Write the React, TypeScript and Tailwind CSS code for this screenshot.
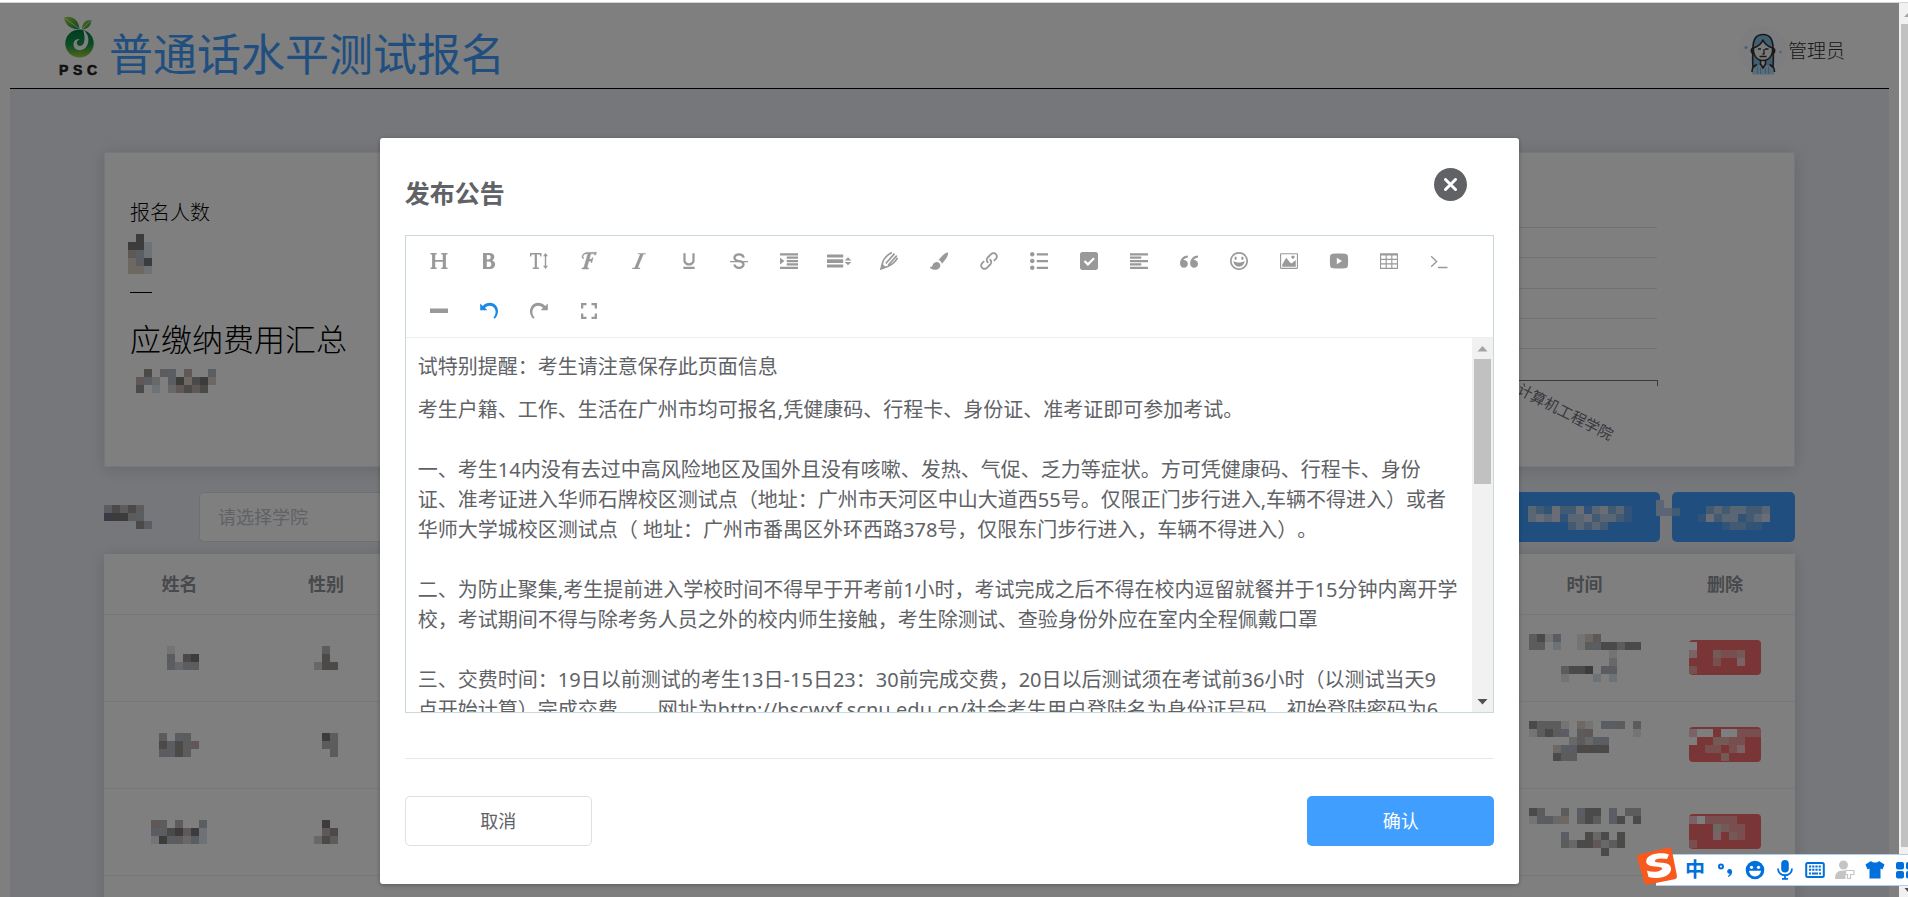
import React, { useState } from 'react';
import {
  ImItalic,
  ImUnderline,
  ImStrikethrough,
  ImIndentIncrease,
  ImLink,
  ImList2,
  ImCheckboxChecked,
  ImParagraphLeft,
  ImQuotesLeft,
  ImHappy,
  ImImage,
  ImTable2,
} from 'react-icons/im';

// Colours of the blocks that hide personal data
const palette: Record<string, string> = {
  d: '#787878',
  k: '#989492',
  g: '#b8b8b8',
  m: '#d0d0d0',
  l: '#e8e8e8',
  n: '#b4bcc4',
  b: '#d8e4ec',
  t: '#dcd0c4',
  r: '#c0b0ac',
  p: '#78708c',
  A: '#b4cce8',
  B: '#84b4e4',
  C: '#62a6ee',
  D: '#d4d8ec',
  P: '#f09c9c',
  Q: '#e8b4a8',
  R: '#f4c4cc',
  W: '#fcfcfc',
};

const Mosaic: React.FC<{ rows: string[]; className?: string }> = ({ rows, className = '' }) => {
  const w = Math.max(...rows.map((r) => r.length)) * 8;
  const h = rows.length * 8;
  return (
    <svg width={w} height={h} shapeRendering="crispEdges" className={`shrink-0 ${className}`} aria-hidden="true">
      {rows.map((row, y) =>
        row.split('').map((c, x) =>
          palette[c] ? <rect key={`${x}-${y}`} x={x * 8} y={y * 8} width="8" height="8" fill={palette[c]} /> : null
        )
      )}
    </svg>
  );
};

const Glyph: React.FC<{ children: React.ReactNode }> = ({ children }) => (
  <svg width="18" height="18" viewBox="0 0 18 18" fill="currentColor" overflow="visible">
    {children}
  </svg>
);

const tools = [
  { name: '标题', icon: <Glyph><path d="M.5 1h6.200v1.500H5.200v5.600h7.600V2.500h-1.500V1h6.200v1.500h-1.600v13h1.600V17h-6.200v-1.500h1.500V9.800H5.200v5.700h1.500V17H.5v-1.500h1.600v-13H.5z" /></Glyph> },
  { name: '加粗', icon: <Glyph><path fillRule="evenodd" d="M3 1h6.600c3.100 0 4.700 1.600 4.700 4 0 1.700-.8 2.800-2.100 3.400 1.800.5 2.900 1.900 2.900 3.900 0 3-1.900 4.700-5.300 4.700H3zm3.800 2v4.400h1.700c1.400 0 2.200-.8 2.200-2.200S9.900 3 8.500 3zm0 6.500V15h2c1.700 0 2.500-1.100 2.500-2.800s-.9-2.700-2.500-2.700z" /></Glyph> },
  { name: '字号', icon: <Glyph><path d="M0 1h11.500v3.600h-1.200l-.5-2.100H6.900v13.100h2V17H2.700v-1.400h2V2.500H1.700l-.5 2.100H0zM15.500 1l2.500 3.200h-1.800v9.600H18L15.500 17 13 13.800h1.800V4.200H13z" /></Glyph> },
  { name: '字体', icon: <Glyph><path stroke="currentColor" strokeWidth=".5" d="M3.200 6.800C1.500 6 1.700 3.300 3.400 1.900 4.900.6 7 .3 9 .4l7.500-.2-.9 2.900h-1l.1-1.300h-4L9.300 7.300h2.200l.8-1.500h.8l-1.300 4.800H11l.1-1.500H8.800l-1.600 5.700c-.2.8.2 1.100 1.400 1.300l-.2.900H1.800l.2-.9c1.300-.2 1.900-.6 2.200-1.600L7.900 1.700C5.500 1.600 3.200 2.300 3 4.300c-.1.900.2 1.400.9 1.700z" /></Glyph> },
  { name: '斜体', icon: <ImItalic size={18} /> },
  { name: '下划线', icon: <ImUnderline size={18} /> },
  { name: '删除线', icon: <ImStrikethrough size={18} /> },
  { name: '缩进', icon: <ImIndentIncrease size={18} /> },
  { name: '行高', icon: <Glyph><path d="M-3 2.500h16.200v3.100H-3zM-3 7.200h16.200v3.800H-3zM-3 12.400h16.200v3.100H-3zM18 5.200l3.300 3.300h-6.600zM18 13.300l3.300-3.300h-6.600z" /></Glyph> },
  { name: '文字颜色', icon: <Glyph><g fill="none" stroke="currentColor" strokeWidth="1.700"><path d="M11.800.4C8 2.600 4.200 6 3 9.200L1 16.800l7.300-2.600C12 12.500 15.500 9.500 17.500 5.800M5.800 11.500 14.500 1.600M8.200 13.200l8.600-9.600" /></g><path d="M2.200 11.500.5 17.500l5.600-2z" /></Glyph> },
  { name: '背景颜色', icon: <Glyph><path d="M17.300.2c1 .4.900 1.700.3 3.300-1 2.800-3.300 5.900-5.800 8.200-.3-1.700-1.500-3-3.200-3.600C10.900 5 14.300 1.400 17.300.2zM5.700 10.200c2.700-.7 5.300 1.700 4.500 4.200-1.100 3.700-6.400 4.300-9.500 2.200-.7-.5-.8-1.100-.5-1.800.8.400 1.700.200 2-.8.500-1.900 1.600-3.300 3.500-3.800z" /></Glyph> },
  { name: '链接', icon: <ImLink size={18} /> },
  { name: '列表', icon: <ImList2 size={18} /> },
  { name: '待办', icon: <ImCheckboxChecked size={18} /> },
  { name: '对齐', icon: <ImParagraphLeft size={18} /> },
  { name: '引用', icon: <ImQuotesLeft size={18} /> },
  { name: '表情', icon: <ImHappy size={18} /> },
  { name: '图片', icon: <ImImage size={18} /> },
  { name: '视频', icon: <Glyph><path fillRule="evenodd" d="M3 1.700c4-.3 8-.3 12 0 2 .2 2.700 1 2.900 2.800.3 3 .3 6 0 9-.2 1.800-.9 2.600-2.900 2.800-4 .3-8 .3-12 0-2-.2-2.700-1-2.900-2.800-.3-3-.3-6 0-9 .2-1.800.9-2.600 2.900-2.800zm3.800 4.100v6.500L12 9z" /></Glyph> },
  { name: '表格', icon: <ImTable2 size={18} /> },
  { name: '代码', icon: <Glyph><path d="m1.200 4.200 5.400 5.300-5.400 5.300M8 15.500h9.500" fill="none" stroke="currentColor" strokeWidth="1.400" /></Glyph> },
  { name: '分割线', icon: <Glyph><path d="M0 6.500h18v4.500H0z" /></Glyph> },
  { name: '撤销', active: true, icon: <Glyph><path d="M.2 1.500 2.700 4C7-.5 14-.2 16.800 4.800c2.200 4 1.300 8.700-2 12l-1.400-1.200c2.400-2.600 2.900-6 1.400-8.900-2-3.600-6.500-4.100-9.800-1L7.300 8.200H.2z" /></Glyph> },
  { name: '重做', icon: <Glyph><path d="M17.800 1.500 15.300 4C11-.5 4-.2 1.200 4.800c-2.200 4-1.300 8.700 2 12l1.400-1.200C2.200 13 1.700 9.600 3.200 6.700c2-3.600 6.500-4.100 9.800-1l-2.300 2.500h7.100z" /></Glyph> },
  { name: '全屏', icon: <Glyph><path d="M1 1h5.500v2.300H3.300v3.200H1zM11.500 1H17v5.500h-2.300V3.300h-3.200zM1 11.500h2.300v3.200h3.200V17H1zM14.700 11.500H17V17h-5.500v-2.300h3.200z" /></Glyph> },
];

const rows = [
  {
    name: ['.l...', '.g.kd', '.nmng'],
    sex: ['.g.', '.k.', 'mkk'],
    time: ['gkln..ltr.....', 'gg.b..lgnkkgkk', '..........l...', '..........m...', '....gkkd.gn...', '....l...b.b...'],
    del: ['W........', 'R..QPPQ..', '...P..R..', 'P........'],
  },
  {
    name: ['.g.ng..', '.knkgr.', '.gnkg..'],
    sex: ['.dn', '.gg', '..g'],
    time: ['kgggl.tl.nng.g', 'lgkgn.gr.....l', '.....mgmnn....', '...tnnkkkk....', '...kgg........', '..............'],
    del: ['RWW.WWPPP', 'W..QQPP..', '..PP.PR..', '....Q....'],
  },
  {
    name: ['rg.g..n', 'nnkdrdb', 'ldngmnb'],
    sex: ['.d.', '.rk', 'mkg'],
    time: ['kg..g.nkk.n.gg', 'lngmt.gkg.nk.k', '..............', '....n..kmk.k..', '....gmkkrmgk..', '.........k....'],
    del: ['RWPPPP...', '...tQPP..', '...R.QP..', 'P........'],
  },
];

const notice = [
  ['试特别提醒：考生请注意保存此页面信息'],
  [
    '考生户籍、工作、生活在广州市均可报名,凭健康码、行程卡、身份证、准考证即可参加考试。',
    '',
    '一、考生14内没有去过中高风险地区及国外且没有咳嗽、发热、气促、乏力等症状。方可凭健康码、行程卡、身份',
    '证、准考证进入华师石牌校区测试点（地址：广州市天河区中山大道西55号。仅限正门步行进入,车辆不得进入）或者',
    '华师大学城校区测试点（ 地址：广州市番禺区外环西路378号，仅限东门步行进入，车辆不得进入）。',
    '',
    '二、为防止聚集,考生提前进入学校时间不得早于开考前1小时，考试完成之后不得在校内逗留就餐并于15分钟内离开学',
    '校，考试期间不得与除考务人员之外的校内师生接触，考生除测试、查验身份外应在室内全程佩戴口罩',
    '',
    '三、交费时间：19日以前测试的考生13日-15日23：30前完成交费，20日以后测试须在考试前36小时（以测试当天9',
    '点开始计算）完成交费　　网址为http://hscwxf.scnu.edu.cn/社会考生用户登陆名为身份证号码，初始登陆密码为6',
  ],
];

const Logo: React.FC = () => (
  <svg width="40" height="62" viewBox="0 0 40 62" aria-label="PSC">
    <defs>
      <linearGradient id="fruit" x1="0" y1="0" x2="0" y2="1">
        <stop offset="0" stopColor="#007a48" />
        <stop offset=".55" stopColor="#159a48" />
        <stop offset="1" stopColor="#a4cc38" />
      </linearGradient>
      <linearGradient id="leaf" x1="0" y1="0" x2="1" y2="1">
        <stop offset="0" stopColor="#a8d840" />
        <stop offset="1" stopColor="#188c40" />
      </linearGradient>
    </defs>
    <path d="M5 2.500c6-2 14 0 15.500 11.500C13 14.500 6.500 11.500 5 2.500z" fill="url(#leaf)" />
    <path d="M32.500 5c-5.500-.5-9.500 2.500-9.500 9.500 5.500-.5 8.800-3 9.500-9.500z" fill="url(#leaf)" />
    <path d="m5 2.500 15 11M32.500 5 23 14" stroke="#fff" strokeWidth=".7" fill="none" />
    <ellipse cx="20.500" cy="28.500" rx="14.200" ry="14" fill="url(#fruit)" />
    <path d="M24 14.800c6.500 4.500 7 13 2.500 18-4.500 4.500-12 2.500-12-3.500 0-4 3.500-6 6.500-4.800-2.700.6-4 3-2.700 5 1.700 2.500 5.200 1.700 6.500-1.500 1.500-4 .7-8.700-.8-13.200z" fill="#fff" />
    <g fontFamily="Liberation Sans" fontWeight="700" fontSize="14" fill="#222" stroke="#222" strokeWidth=".6">
      <text x="0" y="59.500">P</text>
      <text x="14" y="59.500">S</text>
      <text x="28" y="59.500">C</text>
    </g>
  </svg>
);

const Avatar: React.FC = () => (
  <svg width="50" height="50" viewBox="0 0 50 50" aria-hidden="true">
    <circle cx="25" cy="25" r="24.500" fill="#fafbff" />
    <circle cx="8" cy="22.500" r="1.500" fill="#84c4f4" />
    <circle cx="42.500" cy="27" r="1.200" fill="#84c4f4" />
    <g stroke="#333" strokeWidth="1.600" strokeLinejoin="round">
      <path d="M15 42c-.5-5-.5-10 0-19 0-9 4-13.500 10-13.500S35 14 35 23c.5 9 .5 14 0 19z" fill="#84bce4" />
      <path d="M14 49.500c0-5 2-8.500 7-9.500h8c5 1 7 4.500 7.500 9.500z" fill="#b4daf4" stroke="none" />
      <path d="M22.500 34v5l2.500 4 2.500-4v-5" fill="#f4f4f4" />
      <path d="M15.500 23c3-1 7.500-3 9.500-8 2 5 6.500 7 9.500 8 1 7-3.500 12.500-9.500 12.500S14.500 30 15.500 23z" fill="#f4f4f4" />
      <path d="M15.500 23c-3 0-3 5.500.5 5.500M34.500 23c3 0 3 5.500-.5 5.500" fill="none" />
      <path d="M14 47c0-4 2-6.500 5-7.500M36.500 47c0-4-2-6.500-5-7.500" fill="none" />
      <path d="M20 24h3M27 24h3.500M26 24v5h-1.500M21.500 31.500h7" fill="none" strokeWidth="1.300" />
    </g>
    <path d="M19.500 42v7M22.500 43v6M27.500 43v6M30.500 42v7" stroke="#74b4e4" />
  </svg>
);

// Right part of the column chart of entries per college
const Chart: React.FC = () => (
  <svg width="340" height="313" viewBox="0 0 340 313">
    <g stroke="#e0e2ee" strokeWidth="1" shapeRendering="crispEdges">
      <path d="M0 74.500h203M0 104.500h203M0 135.500h203M0 165.500h203M0 195.500h203" />
    </g>
    <path d="M0 227.500h203.500v5" fill="none" stroke="#6e7079" shapeRendering="crispEdges" />
    <text x="62" y="240" fontSize="15" fill="#6e7079" transform="rotate(27 62 240)">计算机工程学院</text>
  </svg>
);

const imeIcons = [
  <span className="text-xl font-bold leading-none">中</span>,
  <svg width="20" height="20" viewBox="0 0 20 20"><circle cx="6" cy="6.500" r="2" fill="none" stroke="currentColor" strokeWidth="2" /><path d="M14.500 9c2 0 3 1.500 2.500 3.800-.4 2-1.700 3.400-3.700 4.200l-.4-1c1-.6 1.600-1.300 1.700-2.200-3.300-.2-3-4.800-.1-4.800z" /></svg>,
  <svg width="20" height="20" viewBox="0 0 20 20"><circle cx="10" cy="10" r="9.300" /><circle cx="6.500" cy="7.300" r="1.600" fill="#fff" /><circle cx="13.500" cy="7.300" r="1.600" fill="#fff" /><path d="M4 10.800h12c-.5 3.600-2.800 5.600-6 5.600s-5.500-2-6-5.600z" fill="#fff" /></svg>,
  <svg width="20" height="20" viewBox="0 0 20 20"><rect x="6.200" y="0" width="7.600" height="12.500" rx="3.800" /><path d="M3 8.500c0 9 14 9 14 0M10 15v4M7 18.800h6" fill="none" stroke="currentColor" strokeWidth="1.800" /></svg>,
  <svg width="20" height="20" viewBox="0 0 20 20"><rect x="1.200" y="3" width="17.600" height="14" rx="1.500" fill="none" stroke="currentColor" strokeWidth="2" /><path d="M4 6.500h12M4 9.800h12" stroke="currentColor" strokeWidth="2" strokeDasharray="2.200 1" /><path d="M4 13.500h2M7 13.500h6M14 13.500h2" stroke="currentColor" strokeWidth="2" /></svg>,
  <svg width="20" height="20" viewBox="0 0 20 20" className="text-[#c4c4c4]" fill="currentColor"><circle cx="8.500" cy="5" r="4.500" /><path d="M0 18.500c0-5 2-8 8.500-8l2 .5v8H0z" /><path d="M10.500 10.500H19v4h-3.500v4h-3v-4h-2z" fill="#fff" stroke="currentColor" strokeWidth="1.200" /></svg>,
  <svg width="20" height="20" viewBox="0 0 20 20"><path d="M6 1c1.500 2 6.500 2 8 0l5.500 3.500-2 5-2-1V18.500h-11V8.500l-2 1-2-5z" /></svg>,
  <svg width="20" height="20" viewBox="0 0 20 20"><rect x="1" y="2" width="8" height="7.500" rx="2" /><rect x="11" y="2" width="8" height="7.500" rx="2" /><rect x="1" y="11" width="8" height="7.500" rx="2" /><rect x="11" y="11" width="8" height="7.500" rx="2" /></svg>,
];

const ImeBar: React.FC = () => (
  <div className="absolute bottom-[11px] -right-3 flex h-8 w-[264px] items-center justify-end border-y border-[#b4d0f0] bg-white text-[#0070dc]">
    <svg width="42" height="42" viewBox="0 0 42 42" className="absolute -left-5 -top-2.5">
      <path d="M3 9.500 32 2.500c2-.4 3.200.3 3.700 2l5.200 26c.3 2-.4 3.300-2.300 3.700L12 39.500c-2 .4-3.500-.3-4-2.200L1.300 13c-.5-2 0-3.100 1.700-3.500z" fill="#f8591c" />
      <path d="M33 9.500c-7-2.500-20.500-1-22.500 5-1.800 6 4.500 7 11 7.200 5 .2 5.700 2 3.200 3.600-3.200 2-8.700 2-13.700.5l1.500 6.200c7 2 16 1.200 20.500-3.200 4.200-4.500 2.300-10.500-6-11-5-.4-8.500-.3-8-2.300.6-2 6.500-2.600 12-1.500z" fill="#fff" />
    </svg>
    {imeIcons.map((icon, idx) => (
      <button key={idx} className="flex h-[30px] w-[30px] shrink-0 items-center justify-center fill-current">
        {icon}
      </button>
    ))}
  </div>
);

export default function App() {
  const [college, setCollege] = useState('');

  return (
    <div className="relative flex h-screen flex-col overflow-hidden bg-white font-['Noto_Sans','Noto_Sans_CJK_SC',sans-serif] text-black [text-spacing-trim:space-all]">
      <div className="h-[3px] shrink-0 border-b border-[#d4d4d4] bg-white"></div>

      <div className="flex min-h-0 flex-1">
        <div className="relative min-w-0 flex-1 overflow-hidden">
          {/* Page */}
          <div className="flex h-full flex-col px-[10px]">
            <header className="flex h-[86px] shrink-0 items-center justify-between border-b border-black pl-[49px] pr-11">
              <div className="flex items-center gap-2.5">
                <Logo />
                <h1 className="pt-4 text-[44px] leading-[60px] text-[#409eff]">普通话水平测试报名</h1>
              </div>
              <div className="flex items-center pt-2 text-[19px] font-light text-[#303133]">
                <Avatar />
                <span className="pt-1">管理员</span>
              </div>
            </header>

            <main className="flex-1 bg-[#edeff6] px-[5%] pt-[63px]">
              <div className="flex gap-5">
                <section className="h-[315px] w-1/3 border border-[#ebeef5] bg-white pl-[25px] pt-[45px] font-light shadow-[0_2px_16px_rgba(0,0,0,0.14)]">
                  <p className="text-xl leading-[30px]">报名人数</p>
                  <Mosaic rows={['.d.', 'ddb', 'rnb', 'tnd', 'ttb']} className="-ml-0.5 mt-1.5" />
                  <div className="mt-[18px] h-px w-[22px] bg-black"></div>
                  <h2 className="mt-[26px] text-[31px] leading-10">应缴纳费用汇总</h2>
                  <Mosaic rows={['.k.gn.r..n', 'rnm.ndtkdt', 'k.b.mrkrk.']} className="ml-1.5 mt-2.5" />
                </section>
                <section className="flex h-[315px] flex-1 justify-end border border-[#ebeef5] bg-white shadow-[0_2px_16px_rgba(0,0,0,0.14)]">
                  <Chart />
                </section>
              </div>

              <div className="mt-[25px] flex h-[50px] items-center">
                <Mosaic rows={['gkgkg.', 'pddgn.', '....kn']} />
                <select
                  value={college}
                  onChange={(e) => setCollege(e.target.value)}
                  aria-label="学院"
                  className="ml-[47px] h-[50px] w-[280px] appearance-none rounded-[5px] border border-[#dcdfe6] bg-white px-[18px] text-lg text-[#c0c4cc]"
                >
                  <option value="">请选择学院</option>
                </select>
                <div className="relative ml-auto flex gap-3">
                  <button className="flex h-[50px] w-[180px] justify-end rounded-[5px] bg-[#409eff] pr-7 pt-3.5">
                    <Mosaic rows={['ABCDBBDCADBAC', 'ADADCAADBAABC', '.....BABAB...']} />
                  </button>
                  <button className="flex h-[50px] w-[123px] justify-center rounded-[5px] bg-[#409eff] pt-3.5">
                    <Mosaic rows={['.BABAABBA', 'CDBAACBAD', '...CBBCC.']} />
                  </button>
                  <Mosaic rows={['A..', 'AAB']} className="absolute right-[115px] top-2" />
                </div>
              </div>

              <table className="mt-3 w-full table-fixed border-collapse bg-white text-center shadow-[0_2px_16px_rgba(0,0,0,0.14)]">
                <thead>
                  <tr className="h-[60px] border-b border-[#ebeef5] text-lg text-[#909399]">
                    <th className="w-[151px]">姓名</th>
                    <th className="w-[142px]">性别</th>
                    <td></td>
                    <th className="w-[141px]">时间</th>
                    <th className="w-[140px]">删除</th>
                  </tr>
                </thead>
                <tbody>
                  {rows.map((row, idx) => (
                    <tr key={idx} className="h-[87px] border-b border-[#ebeef5]">
                      <td><Mosaic rows={row.name} className="mx-auto" /></td>
                      <td><Mosaic rows={row.sex} className="mx-auto" /></td>
                      <td></td>
                      <td><Mosaic rows={row.time} className="mx-auto" /></td>
                      <td>
                        <button aria-label="删除" className="h-[35px] w-[72px] rounded bg-[#f56c6c] align-middle">
                          <Mosaic rows={row.del} />
                        </button>
                      </td>
                    </tr>
                  ))}
                  <tr className="h-[87px]"><td colSpan={5}></td></tr>
                </tbody>
              </table>
            </main>
          </div>

          {/* Dialog */}
          <div className="absolute inset-0 bg-black/50">
            <div
              role="dialog"
              aria-labelledby="dialog-title"
              className="mx-auto mt-[135px] w-[60%] rounded-[3px] bg-white px-[25px] pb-[38px] pt-[30px] text-[#606266] shadow-[0_1px_4px_rgba(0,0,0,0.3)]"
            >
              <div className="flex h-[67px] justify-between">
                <h2 id="dialog-title" className="pt-1.5 text-[25px] font-bold leading-[38px]">发布公告</h2>
                <button
                  aria-label="关闭"
                  className="mr-[27px] flex h-[33px] w-[33px] items-center justify-center rounded-full bg-[#606266]"
                >
                  <svg width="13" height="13" viewBox="0 0 13 13">
                    <path d="m1.500 1.500 10 10M11.500 1.500l-10 10" stroke="#fff" strokeWidth="3" strokeLinecap="round" />
                  </svg>
                </button>
              </div>

              <div className="border border-[#c9d8db]">
                <div className="flex flex-wrap border-b border-[#eeeeee] pb-px pl-2">
                  {tools.map((tool) => (
                    <button
                      key={tool.name}
                      aria-label={tool.name}
                      className={`flex h-[50px] w-[50px] items-center justify-center ${
                        tool.active ? 'text-[#1e88e5]' : 'text-[#999999]'
                      }`}
                    >
                      {tool.icon}
                    </button>
                  ))}
                </div>

                <div className="flex h-[374px]">
                  <div
                    role="textbox"
                    aria-label="公告内容"
                    contentEditable
                    suppressContentEditableWarning
                    className="min-w-0 flex-1 overflow-hidden whitespace-nowrap px-3 pt-px text-xl leading-[30px] outline-none"
                  >
                    {notice.map((lines, i) => (
                      <p key={i} className="mt-[13px]">
                        {lines.map((line, j) => (
                          <React.Fragment key={j}>
                            {line}
                            <br />
                          </React.Fragment>
                        ))}
                      </p>
                    ))}
                  </div>
                  <div className="flex w-[21px] flex-col items-center bg-[#f1f1f1]">
                    <svg width="21" height="21" viewBox="0 0 21 21" className="shrink-0"><path d="m10.500 8 5 5.500h-10z" fill="#a3a3a3" /></svg>
                    <div className="h-[125px] w-[17px] bg-[#c1c1c1]"></div>
                    <svg width="21" height="21" viewBox="0 0 21 21" className="mt-auto shrink-0"><path d="m10.500 13.500 5-5.500h-10z" fill="#505050" /></svg>
                  </div>
                </div>
              </div>

              <hr className="mt-[45px] border-[#e4e7ed]" />

              <div className="mt-[37px] flex justify-between text-lg">
                <button className="h-[50px] w-[187px] rounded-[5px] border border-[#dcdfe6] bg-white">取消</button>
                <button className="h-[50px] w-[187px] rounded-[5px] bg-[#409eff] text-white">确认</button>
              </div>
            </div>
          </div>
        </div>

        {/* Window scrollbar */}
        <div className="flex w-[9px] shrink-0 flex-col overflow-hidden bg-[#f1f1f1]">
          <svg width="20" height="21" viewBox="0 0 20 21" className="shrink-0"><path d="m10 9 5 5H5z" fill="#a3a3a3" /></svg>
          <div className="ml-0.5 flex-1 bg-[#c1c1c1]"></div>
          <svg width="20" height="50" viewBox="0 0 20 50" className="shrink-0"><path d="m10 46 4.500-5h-9z" fill="#505050" /></svg>
        </div>
      </div>

      <ImeBar />
    </div>
  );
}
